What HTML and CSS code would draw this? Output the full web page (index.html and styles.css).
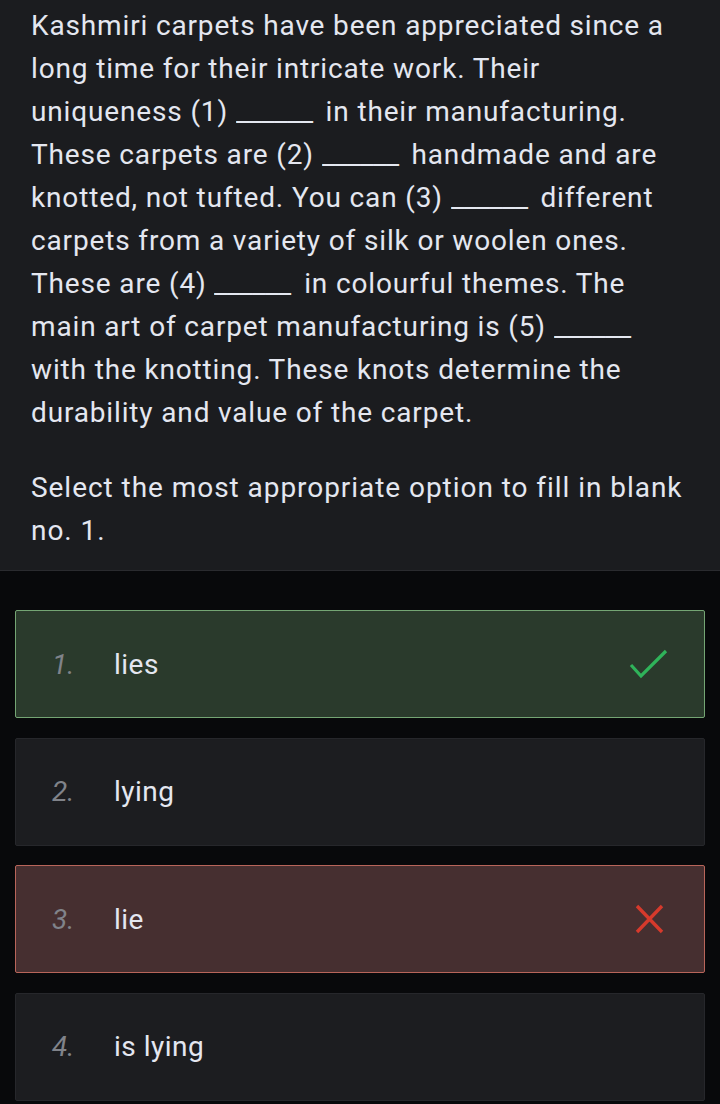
FILE: index.html
```html
<!DOCTYPE html>
<html>
<head>
<meta charset="utf-8">
<link rel="stylesheet" href="styles.css">
</head>
<body>
<section class="question">
  <p class="passage">Kashmiri carpets have been appreciated since a<br>long time for their intricate work. Their<br>uniqueness (1) <span class="blank">______</span> in their manufacturing.<br>These carpets are (2) <span class="blank">______</span> handmade and are<br>knotted, not tufted. You can (3) <span class="blank">______</span> different<br>carpets from a variety of silk or woolen ones.<br>These are (4) <span class="blank">______</span> in colourful themes. The<br>main art of carpet manufacturing is (5) <span class="blank">______</span><br>with the knotting. These knots determine the<br>durability and value of the carpet.</p>
  <p class="prompt">Select the most appropriate option to fill in blank<br>no. 1.</p>
</section>
<section class="options">
  <div class="option correct">
    <span class="num">1.</span><span class="text">lies</span>
    <svg class="mark" width="40" height="30" viewBox="0 0 40 30"><path d="M2 16 L12 27 L37 2" fill="none" stroke="#2fb35a" stroke-width="3.2"/></svg>
  </div>
  <div class="option">
    <span class="num">2.</span><span class="text">lying</span>
  </div>
  <div class="option wrong">
    <span class="num">3.</span><span class="text">lie</span>
    <svg class="mark" width="40" height="30" viewBox="0 0 40 30"><path d="M8 2 L33 28 M33 2 L8 28" fill="none" stroke="#d63a2c" stroke-width="3.4"/></svg>
  </div>
  <div class="option">
    <span class="num">4.</span><span class="text">is lying</span>
  </div>
</section>
</body>
</html>
```
FILE: styles.css
```css
html, body {
  margin: 0;
  padding: 0;
  background: #08090b;
}
body {
  width: 720px;
  font-family: Roboto, "Liberation Sans", sans-serif;
}
.question {
  background: #1b1c1f;
  border-bottom: 1px solid #2a2b2f;
  padding: 4px 20px 18px 31px;
}
.question p {
  margin: 0;
  color: #e4e7f0;
  font-size: 28px;
  line-height: 43px;
  white-space: nowrap;
  letter-spacing: 0.85px;
}
.blank {
  display: inline-block;
  letter-spacing: -0.6px;
  width: 82px;
  transform: scaleX(1.06);
  transform-origin: left center;
}
.passage {
  margin-bottom: 32px !important;
}
.prompt {
  letter-spacing: 0.95px !important;
}
.options {
  padding: 39px 15px 0 15px;
  display: flex;
  flex-direction: column;
  gap: 19.5px;
}
.option {
  height: 106px;
  border: 1px solid #26272b;
  background: #1c1d20;
  border-radius: 2px;
  display: flex;
  align-items: center;
  padding: 0 35px 0 36px;
  color: #e4e7f0;
  font-size: 28px;
}
.option.correct {
  background: #2a3a2c;
  border-color: #74a574;
}
.option.wrong {
  background: #462f30;
  border-color: #b8655a;
}
.num {
  width: 62px;
  color: #80838a;
  font-style: italic;
}
.text {
  flex: 1;
  letter-spacing: 0.5px;
}
.mark {
  display: block;
}
```
